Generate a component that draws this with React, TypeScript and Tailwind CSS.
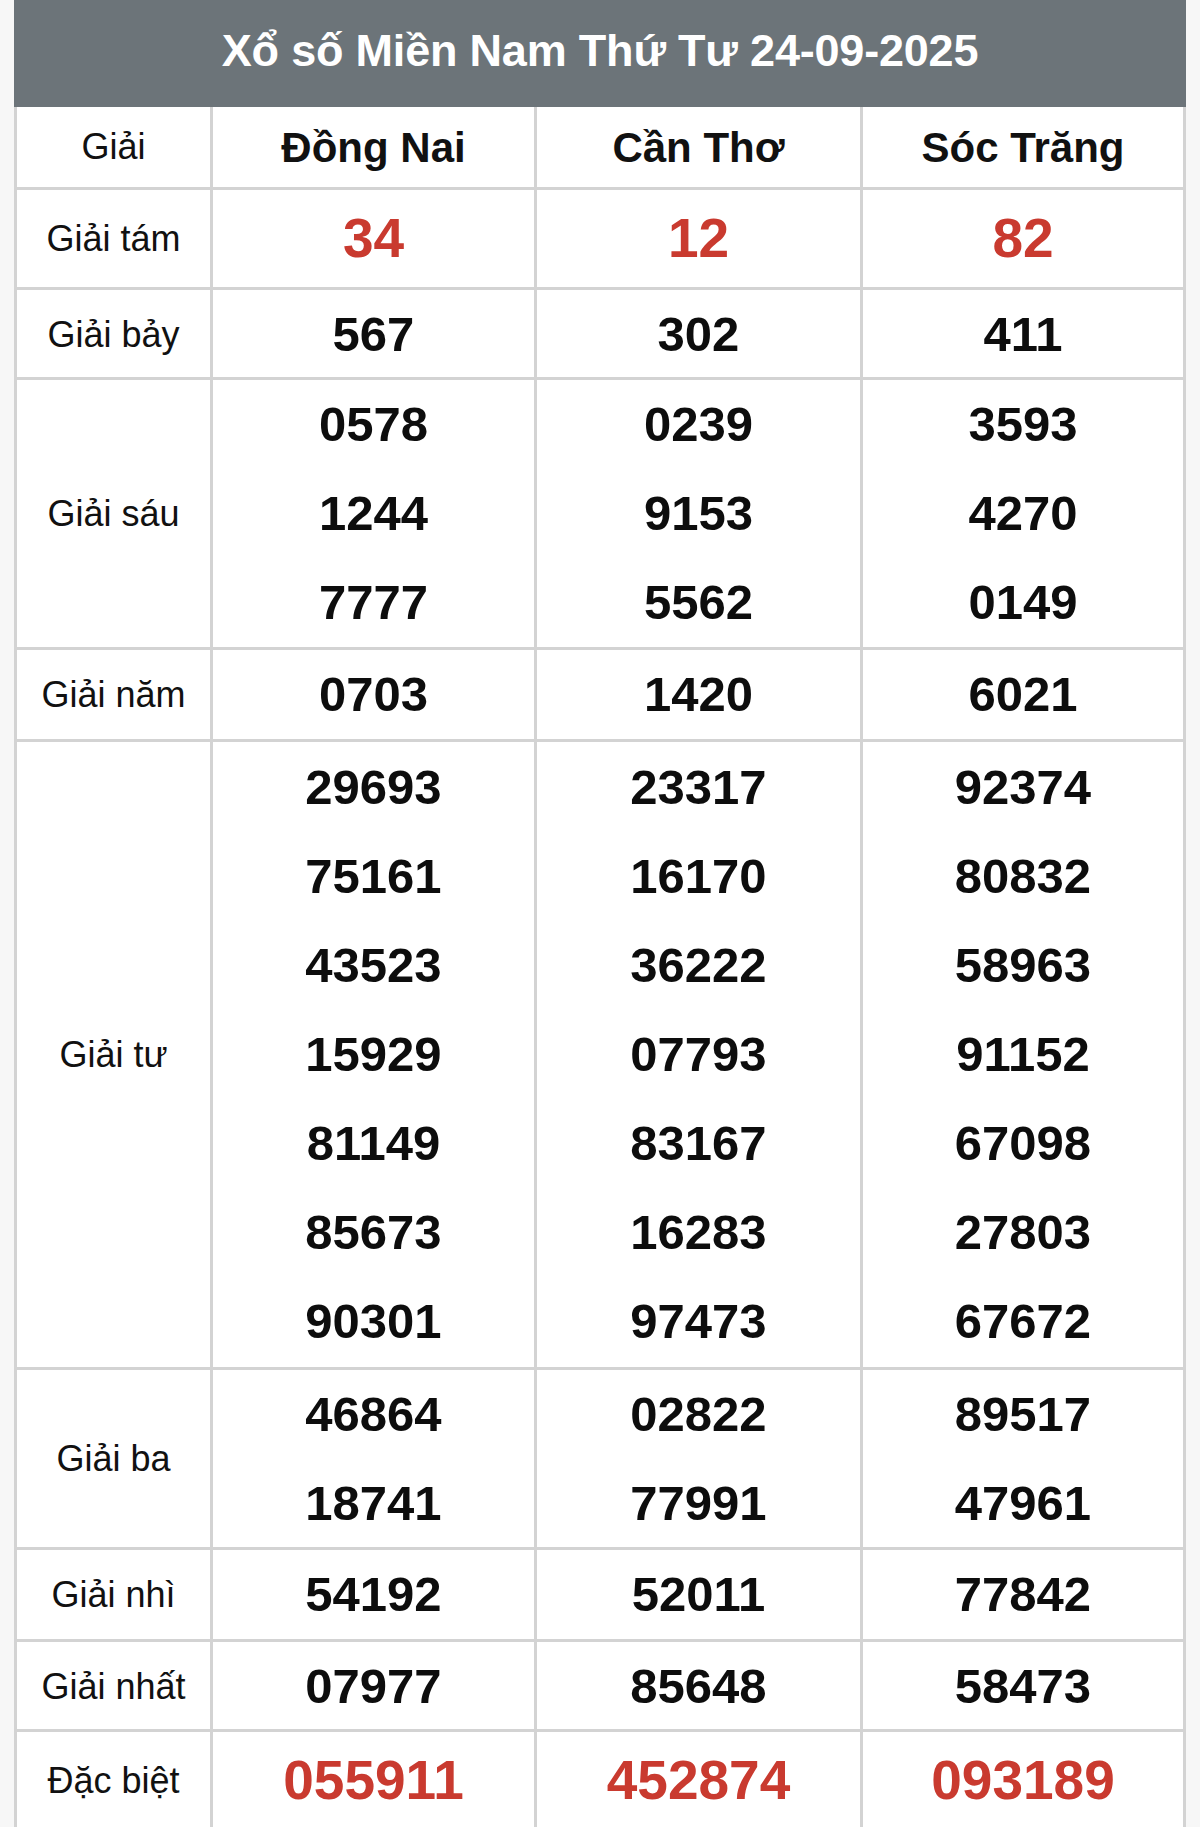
import React from "react";

type Row = { label: string; values: string[][]; red?: boolean; h: number };

const rows: Row[] = [
  { label: "Giải tám", values: [["34"], ["12"], ["82"]], red: true, h: 100 },
  { label: "Giải bảy", values: [["567"], ["302"], ["411"]], h: 90 },
  {
    label: "Giải sáu",
    values: [
      ["0578", "1244", "7777"],
      ["0239", "9153", "5562"],
      ["3593", "4270", "0149"],
    ],
    h: 270,
  },
  { label: "Giải năm", values: [["0703"], ["1420"], ["6021"]], h: 92 },
  {
    label: "Giải tư",
    values: [
      ["29693", "75161", "43523", "15929", "81149", "85673", "90301"],
      ["23317", "16170", "36222", "07793", "83167", "16283", "97473"],
      ["92374", "80832", "58963", "91152", "67098", "27803", "67672"],
    ],
    h: 628,
  },
  {
    label: "Giải ba",
    values: [
      ["46864", "18741"],
      ["02822", "77991"],
      ["89517", "47961"],
    ],
    h: 180,
  },
  { label: "Giải nhì", values: [["54192"], ["52011"], ["77842"]], h: 92 },
  { label: "Giải nhất", values: [["07977"], ["85648"], ["58473"]], h: 90 },
  { label: "Đặc biệt", values: [["055911"], ["452874"], ["093189"]], red: true, h: 100 },
];

export default function App() {
  return (
    <div className="min-h-screen bg-[#f7f7f7] pl-[14px] pr-[14px] font-['Liberation_Sans',Arial,sans-serif]">
      <div className="w-[1172px] bg-white">
        <div className="h-[107px] bg-[#6c7479] flex items-center justify-center pb-[6px] text-white font-bold text-[45px] tracking-[-0.2px]">
          Xổ số Miền Nam Thứ Tư 24-09-2025
        </div>
        <div className="grid grid-cols-[196px_324px_326px_326px] h-[83px] border-b-[3px] border-[#d3d3d3]">
          <div className="border-l-[3px] border-[#d3d3d3] flex items-center justify-center text-[36px] text-[#111]">
            Giải
          </div>
          {["Đồng Nai", "Cần Thơ", "Sóc Trăng"].map((p, i) => (
            <div
              key={p}
              className={
                i === 2
                  ? "border-l-[3px] border-r-[3px] border-[#d3d3d3] flex items-center justify-center text-[42px] font-bold text-[#111]"
                  : "border-l-[3px] border-[#d3d3d3] flex items-center justify-center text-[42px] font-bold text-[#111]"
              }
            >
              {p}
            </div>
          ))}
        </div>
        {rows.map((r) => (
          <div
            key={r.label}
            className="grid grid-cols-[196px_324px_326px_326px] border-b-[3px] border-[#d3d3d3]"
            style={{ height: r.h }}
          >
            <div className="border-l-[3px] border-[#d3d3d3] flex items-center justify-center text-[36px] text-[#111]">
              {r.label}
            </div>
            {r.values.map((col, i) => (
              <div
                key={i}
                className={
                  i === 2
                    ? "border-l-[3px] border-r-[3px] border-[#d3d3d3] flex flex-col items-center justify-center"
                    : "border-l-[3px] border-[#d3d3d3] flex flex-col items-center justify-center"
                }
              >
                {col.map((v, j) => (
                  <div
                    key={j}
                    className={
                      r.red
                        ? "h-[89px] flex items-center font-bold text-[55px] text-[#c93a2f] leading-none"
                        : "h-[89px] flex items-center font-bold text-[49px] text-[#0d0d0d] leading-none"
                    }
                  >
                    {v}
                  </div>
                ))}
              </div>
            ))}
          </div>
        ))}
      </div>
    </div>
  );
}
